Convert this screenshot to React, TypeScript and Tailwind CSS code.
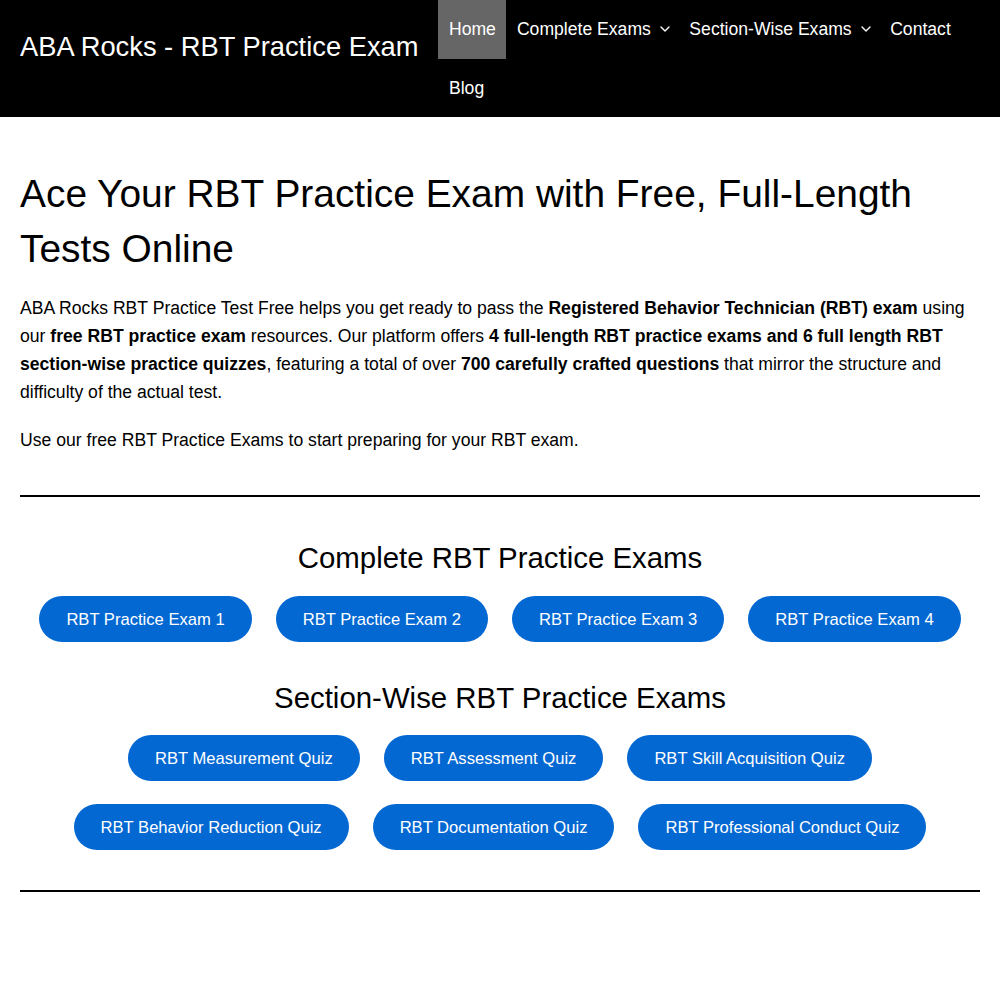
import { ChevronDown } from 'lucide-react';

const nav = [
  { label: 'Home', active: true },
  { label: 'Complete Exams', drop: true },
  { label: 'Section-Wise Exams', drop: true },
  { label: 'Contact' },
  { label: 'Blog' },
];

const complete = ['RBT Practice Exam 1', 'RBT Practice Exam 2', 'RBT Practice Exam 3', 'RBT Practice Exam 4'];

const sections = [
  'RBT Measurement Quiz',
  'RBT Assessment Quiz',
  'RBT Skill Acquisition Quiz',
  'RBT Behavior Reduction Quiz',
  'RBT Documentation Quiz',
  'RBT Professional Conduct Quiz',
];

function PillButton({ label }: { label: string }) {
  return (
    <a href="#" className="h-[46px] flex items-center px-[27px] rounded-full bg-[#0468d2] text-white text-[16.6px] leading-[21px] whitespace-nowrap">
      {label}
    </a>
  );
}

export default function App() {
  return (
    <div className="min-h-[1000px] bg-white text-black font-['Liberation_Sans',Arial,sans-serif]">
      {/* ─── Header ─── */}
      <header className="bg-black text-white h-[117px] flex px-5">
        <div className="text-[27.3px] leading-[30px] pt-[32px] whitespace-nowrap">ABA Rocks - RBT Practice Exam</div>
        <nav className="ml-5 w-[542px] flex flex-wrap content-start">
          {nav.map(n => (
            <a key={n.label} href="#" className={`h-[58.5px] flex items-center px-[10.5px] text-[17.6px] whitespace-nowrap ${n.active ? 'bg-[#666666]' : ''}`}>
              {n.label}
              {n.drop && <ChevronDown size={16} strokeWidth={2} className="ml-[6px] -mr-[4.5px]" />}
            </a>
          ))}
        </nav>
      </header>

      {/* ─── Main ─── */}
      <main className="px-5">
        <h1 className="mt-[49px] text-[38.9px] leading-[55px] font-normal">
          Ace Your RBT Practice Exam with Free, Full-Length Tests Online
        </h1>
        <p className="mt-[18px] text-[17.6px] leading-[28px]">
          ABA Rocks RBT Practice Test Free helps you get ready to pass the <strong>Registered Behavior Technician (RBT) exam</strong> using our <strong>free RBT practice exam</strong> resources. Our platform offers <strong>4 full-length RBT practice exams and 6 full length RBT section-wise practice quizzes</strong>, featuring a total of over <strong>700 carefully crafted questions</strong> that mirror the structure and difficulty of the actual test.
        </p>
        <p className="mt-5 text-[17.6px] leading-[28px]">Use our free RBT Practice Exams to start preparing for your RBT exam.</p>

        <div className="mt-[41px] border-t-2 border-black" />

        <h2 className="mt-[43px] text-[29.4px] leading-[35px] text-center font-normal">Complete RBT Practice Exams</h2>
        <div className="mt-[21px] flex flex-wrap justify-center gap-x-6 gap-y-[23px]">
          {complete.map(c => <PillButton key={c} label={c} />)}
        </div>

        <h2 className="mt-[38px] text-[29.4px] leading-[35px] text-center font-normal">Section-Wise RBT Practice Exams</h2>
        <div className="mt-[20px] flex flex-wrap justify-center gap-x-6 gap-y-[23px]">
          {sections.map(s => <PillButton key={s} label={s} />)}
        </div>

        <div className="mt-[40px] border-t-2 border-black" />
      </main>
    </div>
  );
}
